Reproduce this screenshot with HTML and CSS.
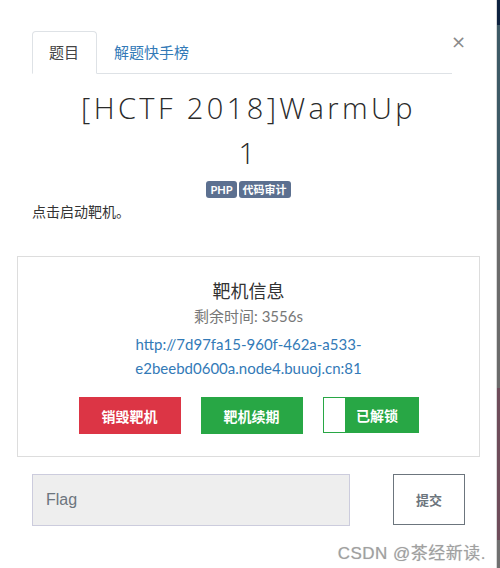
FILE: index.html
```html
<!DOCTYPE html>
<html lang="zh">
<head>
  <meta charset="UTF-8" />
  <title>WarmUp</title>
  <link rel="stylesheet" href="styles.css">
</head>
<body>
  <div class="page">
    <div class="modal">
      <div class="head">
        <ul class="tabs">
          <li class="tab active">题目</li>
          <li class="tab">解题快手榜</li>
        </ul>
        <span class="close">&times;</span>
      </div>

      <div class="inner">
        <h2 class="title">[HCTF 2018]WarmUp<br>1</h2>
        <div class="tags">
          <span class="tag">PHP</span>
          <span class="tag">代码审计</span>
        </div>
        <p class="desc">点击启动靶机。</p>
      </div>

      <div class="target">
        <h4>靶机信息</h4>
        <div class="remain">剩余时间: 3556s</div>
        <a class="link" href="#">http://7d97fa15-960f-462a-a533-<br>e2beebd0600a.node4.buuoj.cn:81</a>
        <div class="actions">
          <button class="btn red">销毁靶机</button>
          <button class="btn green">靶机续期</button>
          <button class="btn unlocked"><span class="knob"></span><span class="lbl">已解锁</span></button>
        </div>
      </div>

      <div class="flag-row">
        <input class="flag" type="text" placeholder="Flag">
        <button class="submit">提交</button>
      </div>

      <div class="mark">CSDN @茶经新读.</div>
    </div>
    <div class="backdrop"></div>
  </div>
</body>
</html>
```

FILE: styles.css
```css
html, body {
  margin: 0; padding: 0;
  background: #fff;
}
body {
  font-family: Lato, "Noto Sans CJK SC", sans-serif;
  color: #333;
  font-size: 14px;
}
.page {
  display: flex;
  width: 500px;
  height: 568px;
  overflow: hidden;
}
.modal {
  flex: 1;
  padding: 31px 16px 0 17px;
  box-sizing: border-box;
}
.backdrop {
  width: 3px;
  border-left: 1px solid #d8d8d8;
  background: linear-gradient(#0d2240 0, #0d2240 25px, #3d5a66 25px, #3d5a66 210px, #6b6b6b 210px, #6b6b6b 388px, #6e4c5a 388px, #6e4c5a 540px, #707070 540px);
}
.head {
  display: flex;
  align-items: flex-start;
  padding-left: 15px;
}
.tabs {
  list-style: none;
  margin: 0; padding: 0;
  display: flex;
  width: 420px;
  border-bottom: 1px solid #dee2e6;
}
.tab {
  padding: 9px 17px 10px 16px;
  line-height: 22px;
  font-size: 15px;
  color: #337ab7;
  border: 1px solid transparent;
  border-radius: 4px 4px 0 0;
  margin-bottom: -1px;
}
.tab.active {
  color: #444;
  border-color: #dee2e6 #dee2e6 #fff;
  background: #fff;
}
.close {
  margin: 1px 0 0 -1px;
  font-family: "DejaVu Sans", sans-serif;
  font-size: 18px;
  line-height: 20px;
  color: #8a8a8a;
}
.inner {
  padding: 0 15px;
}
.title {
  margin: 11px 0 0;
  text-align: center;
  font-family: "Open Sans", sans-serif;
  font-weight: 300;
  font-size: 29px;
  line-height: 45px;
  letter-spacing: 3.4px;
  color: #2a2a2a;
}
.tags {
  text-align: center;
  margin-top: 6px;
  font-size: 0;
}
.tag {
  display: inline-block;
  background: #5c7090;
  color: #fff;
  font-size: 11px;
  font-weight: bold;
  line-height: 17px;
  padding: 0 4px;
  border-radius: 3px;
  margin: 0 1px;
}
.desc {
  margin: 3px 0 0;
  font-size: 14px;
  line-height: 22px;
}
.target {
  margin-top: 33px;
  border: 1px solid #ddd;
  padding: 21px 0 22px;
  text-align: center;
}
.target h4 {
  margin: 0;
  font-size: 18px;
  font-weight: normal;
  line-height: 26px;
  color: #333;
}
.remain {
  color: #777;
  font-size: 15px;
  line-height: 22px;
  margin-top: 1px;
}
.link {
  display: block;
  color: #337ab7;
  text-decoration: none;
  font-size: 15px;
  line-height: 24px;
  margin-top: 5px;
}
.actions {
  display: flex;
  justify-content: center;
  gap: 20px;
  margin-top: 17px;
}
.btn {
  width: 102px;
  height: 37px;
  border: none;
  color: #fff;
  font-family: "Noto Sans CJK SC", sans-serif;
  font-weight: bold;
  font-size: 14px;
  padding: 0;
}
.red { background: #dc3545; }
.green { background: #28a745; }
.unlocked {
  width: 96px;
  height: 36px;
  display: flex;
  align-items: stretch;
  background: #28a745;
  border: 1px solid #28a745;
}
.knob {
  width: 21px;
  background: #fff;
}
.lbl {
  flex: 1;
  display: flex;
  align-items: center;
  justify-content: center;
  padding-right: 8px;
}
.flag-row {
  display: flex;
  justify-content: space-between;
  padding: 0 15px;
  margin-top: 17px;
}
.flag {
  width: 318px;
  height: 52px;
  box-sizing: border-box;
  background: #eee;
  border: 1px solid #ccd;
  padding: 0 13px;
  font-family: "Liberation Sans", sans-serif;
  font-size: 16px;
  outline: none;
}
.flag::placeholder { color: #6c757d; }
.submit {
  width: 72px;
  height: 51px;
  background: #fff;
  border: 1px solid #6c757d;
  color: #6c757d;
  font-family: "Noto Sans CJK SC", sans-serif;
  font-weight: bold;
  font-size: 13px;
}
.mark {
  text-align: right;
  margin: 13px -6px 0 0;
  font-family: "Liberation Sans", "Noto Sans CJK SC", sans-serif;
  font-size: 17px;
  letter-spacing: 0.5px;
  color: #a0a0a0;
  text-shadow: 0 0 1px #ccc;
}
```
